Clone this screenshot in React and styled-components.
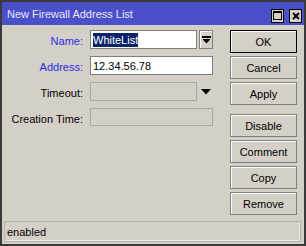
import React from "react";
import styled, { createGlobalStyle } from "styled-components";

const Global = createGlobalStyle`
  html, body {
    margin: 0;
    padding: 0;
    background: #d4d0c8;
  }
  * {
    box-sizing: border-box;
  }
`;

const Window = styled.div`
  width: 306px;
  height: 246px;
  border: 2px solid #3a3a3a;
  background: #d4d0c8;
  display: flex;
  flex-direction: column;
  font-family: "Liberation Sans", Arial, sans-serif;
  font-size: 11px;
  color: #000;
`;

const TitleBar = styled.div`
  height: 23px;
  background: #4b50c8;
  display: flex;
  align-items: center;
  padding: 0 2px 0 5px;
  color: #e6e6ff;
  font-size: 11px;
`;

const Title = styled.div`
  flex: 1;
  padding-top: 1px;
`;

const TitleButton = styled.div`
  width: 13px;
  height: 14px;
  margin-left: 5px;
  margin-top: 4px;
  background: #d4d0c8;
  border: 1px solid #000;
  display: flex;
  align-items: center;
  justify-content: center;
`;

const Body = styled.div`
  flex: 1;
  display: flex;
  flex-direction: column;
  padding: 5px 2px 2px 1px;
`;

const Content = styled.div`
  flex: 1;
  display: flex;
`;

const Form = styled.div`
  display: grid;
  grid-template-columns: 80px 123px;
  grid-template-rows: repeat(4, 20px);
  column-gap: 7px;
  row-gap: 6px;
  align-content: start;
`;

const Label = styled.div`
  text-align: right;
  align-self: center;
  padding-top: 2px;
  color: ${(p) => (p.$blue ? "#2c2ce0" : "#000")};
  white-space: nowrap;
`;

const Field = styled.div`
  display: flex;
  align-items: flex-start;
`;

const Input = styled.div`
  flex: ${(p) => (p.$short ? "0 0 107px" : "1")};
  height: ${(p) => (p.$tall ? "19px" : "18px")};
  border: 1px solid ${(p) => (p.$disabled ? "#a8a8a8" : "#808080")};
  background: ${(p) => (p.$disabled ? "#d4d0c8" : "#fff")};
  display: flex;
  align-items: center;
  padding-left: 2px;
`;

const Selected = styled.span`
  background: #0a246a;
  color: #fff;
  padding: 1px 0;
`;

const DropButton = styled.div`
  width: 14px;
  height: 19px;
  margin-left: 2px;
  border: 1px solid #808080;
  box-shadow: inset 1px 1px #fff;
  background: #d4d0c8;
  display: flex;
  align-items: center;
  justify-content: center;
`;

const ArrowSlot = styled.div`
  width: 14px;
  height: 19px;
  margin-left: 2px;
  display: flex;
  align-items: center;
  justify-content: center;
  padding-top: 1px;
`;

const Buttons = styled.div`
  margin-left: 17px;
  display: flex;
  flex-direction: column;
  gap: 3px;
`;

const Button = styled.div`
  width: 67px;
  height: 23px;
  margin-top: ${(p) => (p.$group ? "6px" : "0")};
  border: 1px solid ${(p) => (p.$default ? "#000" : "#808080")};
  box-shadow: inset 1px 1px #fff;
  display: flex;
  align-items: center;
  justify-content: center;
`;

const Status = styled.div`
  height: 21px;
  margin-left: 1px;
  margin-right: 1px;
  border: 1px solid #b4b0a8;
  box-shadow: inset -1px -1px #eeeae4;
  display: flex;
  align-items: center;
  padding-left: 2px;
`;

const MaxIcon = () => (
  <svg width="9" height="9" viewBox="0 0 9 9">
    <rect x="0.5" y="0.5" width="8" height="8" fill="none" stroke="#000" />
    <rect x="0" y="0" width="9" height="2" fill="#000" />
  </svg>
);

const CloseIcon = () => (
  <svg width="8" height="8" viewBox="0 0 8 8">
    <path d="M1 1L7 7M7 1L1 7" stroke="#000" strokeWidth="2" />
  </svg>
);

const DropIcon = () => (
  <svg width="9" height="8" viewBox="0 0 9 8">
    <rect x="0" y="0" width="9" height="2" fill="#000" />
    <path d="M0.5 3H8.5L4.5 7.5Z" fill="#000" />
  </svg>
);

const Arrow = () => (
  <svg width="10" height="6" viewBox="0 0 10 6">
    <path d="M0 0H10L5 5.5Z" fill="#000" />
  </svg>
);

export default function App() {
  return (
    <Window>
      <Global />
      <TitleBar>
        <Title>New Firewall Address List</Title>
        <TitleButton>
          <MaxIcon />
        </TitleButton>
        <TitleButton>
          <CloseIcon />
        </TitleButton>
      </TitleBar>
      <Body>
        <Content>
          <Form>
            <Label $blue>Name:</Label>
            <Field>
              <Input $short $tall>
                <Selected>WhiteList</Selected>
              </Input>
              <DropButton>
                <DropIcon />
              </DropButton>
            </Field>
            <Label $blue>Address:</Label>
            <Field>
              <Input $tall>12.34.56.78</Input>
            </Field>
            <Label>Timeout:</Label>
            <Field>
              <Input $short $tall $disabled />
              <ArrowSlot>
                <Arrow />
              </ArrowSlot>
            </Field>
            <Label>Creation Time:</Label>
            <Field>
              <Input $disabled />
            </Field>
          </Form>
          <Buttons>
            <Button $default>OK</Button>
            <Button>Cancel</Button>
            <Button>Apply</Button>
            <Button $group>Disable</Button>
            <Button>Comment</Button>
            <Button>Copy</Button>
            <Button>Remove</Button>
          </Buttons>
        </Content>
        <Status>enabled</Status>
      </Body>
    </Window>
  );
}
